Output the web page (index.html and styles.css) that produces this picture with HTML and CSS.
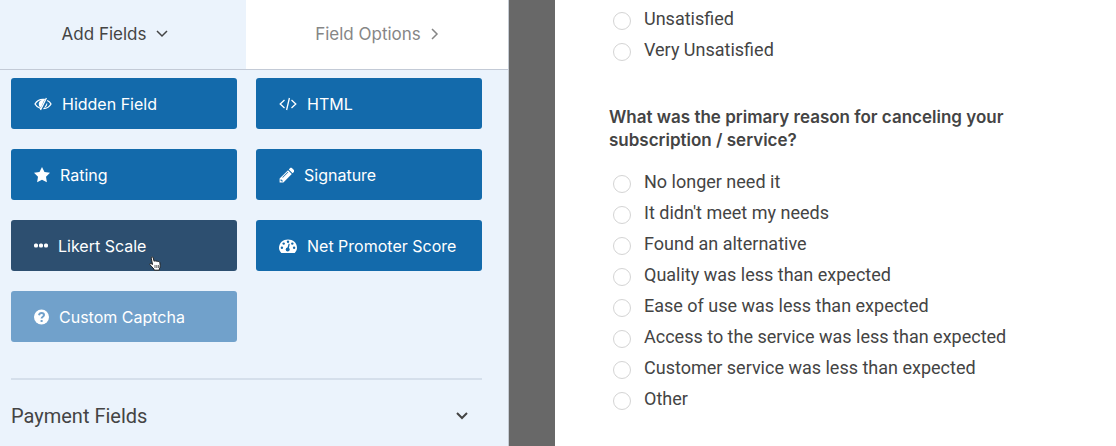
FILE: index.html
```html
<!DOCTYPE html>
<html lang="en">
<head>
    <meta charset="UTF-8">
    <meta name="viewport" content="width=device-width, initial-scale=1.0">
    <title>Form Builder</title>
    <link rel="stylesheet" href="styles.css">
</head>
<body>
    <div class="builder">
        <aside class="sidebar">
            <nav class="tabs">
                <button class="tab tab-active" type="button">
                    Add Fields
                    <svg class="chevron" width="12" height="12" viewBox="0 0 12 12"><path d="M1 3l5 5 5-5"/></svg>
                </button>
                <button class="tab" type="button">
                    Field Options
                    <svg class="chevron" width="8" height="12" viewBox="0 0 8 12"><path d="M1 1l5 5-5 5"/></svg>
                </button>
            </nav>

            <div class="field-list">
                <div class="fields">
                    <button class="field" type="button">
                        <svg width="18" height="16" viewBox="0 0 18 16">
                            <path class="line" d="M6.600 12.500C4 11.700 2 9.900 1 8c1.600-2.900 4.600-4.700 8-4.700.6 0 1.200.1 1.800.2M13.200 4.500C14.900 5.300 16.200 6.500 17 8c-1.500 2.800-4.200 4.500-7.600 4.700M12.400 2L6.500 14"/>
                            <path d="M10.400 3.800C6.900 3.600 4.600 5.800 4.800 8.200c.1 1.700.9 2.900 2.100 3.600z"/>
                            <path d="M13.100 6.800c.6 2.300-.7 4.600-3.100 5.300z"/>
                        </svg>
                        Hidden Field
                    </button>
                    <button class="field" type="button">
                        <svg width="18" height="16" viewBox="0 0 18 16">
                            <path class="line" d="M5.500 4L1.200 8l4.300 4M12.500 4l4.300 4-4.300 4M10.400 2L7.600 14"/>
                        </svg>
                        HTML
                    </button>
                    <button class="field" type="button">
                        <svg width="16" height="16" viewBox="0 0 16 16">
                            <path d="M8 0l2.500 5 5.500.8-4 3.900.9 5.600L8 12.700l-4.900 2.600.9-5.600L0 5.800 5.500 5z"/>
                        </svg>
                        Rating
                    </button>
                    <button class="field" type="button">
                        <svg width="15" height="16" viewBox="0 0 15 16">
                            <path fill-rule="evenodd" d="M9 3.200l3.800 3.800-8.400 8.400H.6v-3.800zM2 12.200l-.5.5v1h1v.900h1l.5-.5zM8.800 4.700l-5.500 5.500.5.5 5.500-5.500z"/>
                            <path d="M9.800 2.400l1.300-1.300c.6-.6 1.200-.6 1.800 0l2 2c.5.600.5 1.200 0 1.800l-1.300 1.300z"/>
                        </svg>
                        Signature
                    </button>
                    <button class="field field-hover" type="button">
                        <svg width="14" height="16" viewBox="0 0 14 16">
                            <rect x="0" y="5.500" width="4" height="4" rx="1.500"/>
                            <rect x="5" y="5.500" width="4" height="4" rx="1.500"/>
                            <rect x="10" y="5.500" width="4" height="4" rx="1.500"/>
                        </svg>
                        Likert Scale
                        <svg class="cursor" width="12" height="15" viewBox="0 0 12 15">
                            <path d="M3.500 8.500L2.300 2.200C2 .6 3.800.4 4.200 1.800l.9 3.500c.6-.7 1.500-.6 1.900.1.600-.6 1.500-.4 1.900.3.9-.5 1.800.1 2 1.200l.3 2.800c.1 1.500-.5 2.300-.8 3.200l-.1 1.300H5.200l-.3-1.200L1 8.800C.2 7.600 1.500 7 2.300 7.700z"/>
                            <path class="cursor-lines" d="M6 9v3M7.800 9v3M9.400 9v3"/>
                        </svg>
                    </button>
                    <button class="field" type="button">
                        <svg width="18" height="16" viewBox="0 0 18 16">
                            <path d="M2.300 15C.9 13.500 0 11.900 0 9.800 0 4.900 4 1.400 9 1.400s9 3.500 9 8.400c0 2.100-.9 3.700-2.300 5.200z"/>
                            <g class="dial">
                                <circle cx="2.900" cy="9.800" r="1.200"/>
                                <circle cx="4.700" cy="5.600" r="1.200"/>
                                <circle cx="9" cy="3.800" r="1.200"/>
                                <circle cx="13.300" cy="5.600" r="1.200"/>
                                <circle cx="15.100" cy="9.800" r="1.200"/>
                                <circle cx="8.700" cy="11.500" r="2"/>
                                <path d="M8.100 11l1.600-5.400 1 .3-1.100 5.500z"/>
                            </g>
                        </svg>
                        Net Promoter Score
                    </button>
                    <button class="field field-disabled" type="button" disabled>
                        <svg width="15" height="16" viewBox="0 0 15 16">
                            <circle cx="7.500" cy="8" r="7.500"/>
                            <path class="question" d="M5 6.200c.3-1.500 1.300-2.200 2.500-2.200 1.500 0 2.500.8 2.500 2 0 1.700-2.400 1.700-2.400 3.400M7.600 10.900v2"/>
                        </svg>
                        Custom Captcha
                    </button>
                </div>

                <button class="group" type="button">
                    Payment Fields
                    <svg class="chevron chevron-bold" width="12" height="12" viewBox="0 0 12 12"><path d="M1 3l5 5 5-5"/></svg>
                </button>
            </div>
        </aside>

        <main class="preview">
            <div class="options">
                <label class="option"><input type="radio" name="satisfaction">Unsatisfied</label>
                <label class="option"><input type="radio" name="satisfaction">Very Unsatisfied</label>
            </div>

            <fieldset class="question-block">
                <legend>What was the primary reason for canceling your subscription / service?</legend>
                <div class="options">
                    <label class="option"><input type="radio" name="reason">No longer need it</label>
                    <label class="option"><input type="radio" name="reason">It didn't meet my needs</label>
                    <label class="option"><input type="radio" name="reason">Found an alternative</label>
                    <label class="option"><input type="radio" name="reason">Quality was less than expected</label>
                    <label class="option"><input type="radio" name="reason">Ease of use was less than expected</label>
                    <label class="option"><input type="radio" name="reason">Access to the service was less than expected</label>
                    <label class="option"><input type="radio" name="reason">Customer service was less than expected</label>
                    <label class="option"><input type="radio" name="reason">Other</label>
                </div>
            </fieldset>
        </main>
    </div>
</body>
</html>
```

FILE: styles.css
```css
* {
    box-sizing: border-box;
}

body {
    margin: 0;
    background-color: #686868;
    color: #444;
    font-family: Inter, "Liberation Sans", sans-serif;
    font-size: 17px;
}

button {
    margin: 0;
    border: none;
    font: inherit;
    cursor: pointer;
}

.builder {
    display: flex;
    gap: 46px;
    min-height: 100vh;
}

/* Left panel */
.sidebar {
    flex: 0 0 509px;
    background-color: #ebf3fc;
    border-right: 1px solid #c5cbd3;
}

.tabs {
    display: grid;
    grid-template-columns: 246px 1fr;
    height: 70px;
    border-bottom: 1px solid #c3cad6;
}

.tab {
    display: flex;
    align-items: center;
    justify-content: center;
    gap: 10px;
    padding: 0 0 2px;
    background-color: #fff;
    color: #868686;
}

.tab-active {
    padding-right: 16px;
    background-color: #ebf3fc;
    color: #444;
}

.chevron {
    fill: none;
    stroke: currentColor;
    stroke-width: 1.5;
}

.chevron-bold {
    stroke-width: 2;
}

.field-list {
    padding: 8px 26px 0 11px;
}

.fields {
    display: grid;
    grid-template-columns: 1fr 1fr;
    gap: 20px 19px;
    padding-bottom: 36px;
    border-bottom: 2px solid #d5dfeb;
}

.field {
    position: relative;
    display: flex;
    align-items: center;
    gap: 10px;
    height: 51px;
    padding: 0 23px;
    border-radius: 3px;
    background-color: #136aab;
    color: #fff;
    font-size: 16px;
    white-space: nowrap;
    fill: currentColor;
}

.field-hover {
    background-color: #2d4f70;
}

.field-disabled {
    background-color: #71a1cb;
    cursor: default;
}

.line {
    fill: none;
    stroke: currentColor;
    stroke-width: 1.3;
}

.dial {
    fill: #136aab;
}

.question {
    fill: none;
    stroke: #71a1cb;
    stroke-width: 2;
}

.cursor {
    position: absolute;
    left: 138px;
    top: 36px;
    fill: #fff;
    stroke: #222;
    stroke-width: 1;
}

.cursor-lines {
    stroke-width: 0.7;
}

.group {
    display: flex;
    align-items: center;
    justify-content: space-between;
    width: 100%;
    padding: 20px 14px 20px 0;
    background: none;
    color: #444;
    font-family: Roboto, "Liberation Sans", sans-serif;
    font-size: 20px;
    line-height: 32px;
}

/* Form preview */
.preview {
    flex: 1;
    padding: 3px 54px 30px;
    background-color: #fff;
}

.option {
    display: flex;
    align-items: center;
    gap: 13px;
    font-family: Roboto, "Liberation Sans", sans-serif;
    font-size: 18px;
    line-height: 31px;
}

.option input {
    flex: none;
    appearance: none;
    width: 18px;
    height: 18px;
    margin: 4px 0 0 4px;
    border: 1px solid #d4d4d4;
    border-radius: 50%;
    background-color: #fff;
}

.question-block {
    margin: 41px 0 0;
    padding: 0;
    border: none;
}

.question-block legend {
    max-width: 420px;
    padding: 0 0 14px;
    font-weight: 600;
    line-height: 23px;
}
```
